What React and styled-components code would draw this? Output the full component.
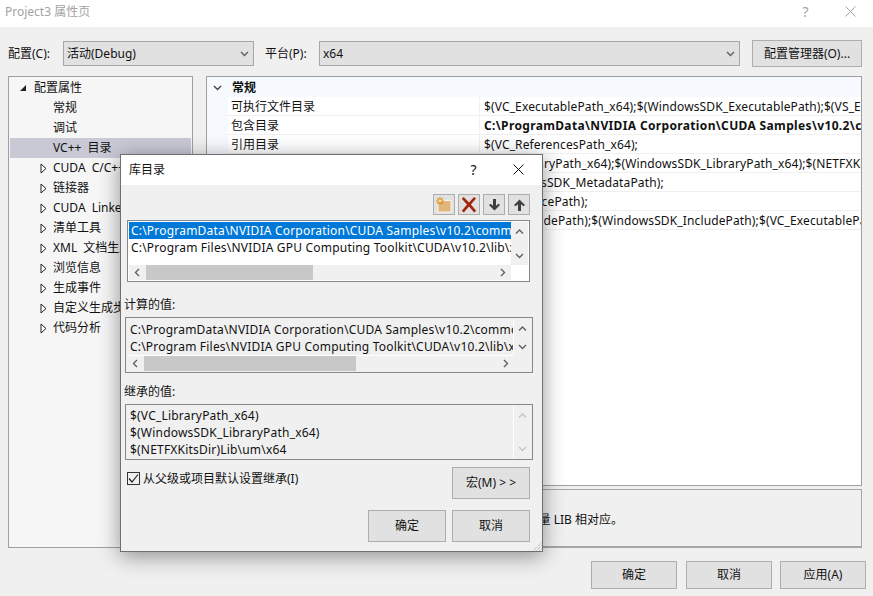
import React from 'react';
import styled, { createGlobalStyle } from 'styled-components';

const GlobalStyle = createGlobalStyle`
  html, body {
    margin: 0;
    padding: 0;
    background: #f0f0f0;
  }
  * {
    box-sizing: border-box;
  }
`;

const FONT = '"Noto Sans", "Noto Sans CJK SC", sans-serif';

const Page = styled.div`
  position: relative;
  width: 873px;
  height: 596px;
  overflow: hidden;
  background: #f0f0f0;
  color: #111;
  font: 12px/16px ${FONT};
`;

const TitleBar = styled.div`
  display: flex;
  align-items: center;
  height: ${p => p.$height}px;
  padding: 0 ${p => p.$right}px ${p => p.$bottom}px ${p => p.$left}px;
  background: #fff;
  color: ${p => (p.$inactive ? '#a3a3a3' : '#111')};
`;

const TitleText = styled.span`
  flex: 1;
`;

const TitleButton = styled.span`
  display: flex;
  justify-content: center;
  align-items: center;
  width: 45px;
  font-size: 14px;
`;

const Body = styled.div`
  display: flex;
  flex-direction: column;
  padding: 13px 11px 0 8px;
`;

const ConfigRow = styled.div`
  display: flex;
  align-items: center;
  height: 27px;
`;

const ConfigLabel = styled.label`
  flex: none;
  width: ${p => p.$width}px;
`;

const Select = styled.div`
  display: flex;
  justify-content: space-between;
  align-items: center;
  flex: ${p => (p.$grow ? 1 : 'none')};
  width: ${p => p.$width}px;
  height: 25px;
  margin-right: ${p => p.$gap}px;
  padding: 0 4px 0 3px;
  background: #e1e1e1;
  border: 1px solid #a6a6a6;
`;

const Button = styled.button`
  flex: none;
  width: ${p => p.$width}px;
  height: ${p => p.$height}px;
  margin-left: ${p => p.$pull || 0}px;
  padding: 0;
  background: #e1e1e1;
  border: 1px solid #adadad;
  color: #111;
  font: inherit;
`;

const Panels = styled.div`
  display: flex;
  gap: 13px;
  margin-top: 9px;
  height: 472px;
`;

const Tree = styled.div`
  flex: none;
  width: 185px;
  padding: 1px;
  background: #f6f6f6;
  border: 1px solid #9f9f9f;
`;

const TreeRow = styled.div`
  display: flex;
  align-items: center;
  height: 20px;
  padding-left: ${p => p.$left}px;
  background: ${p => (p.$selected ? '#c9c9d6' : 'transparent')};
  white-space: nowrap;
  word-spacing: 3px;
  overflow: hidden;
`;

const TreeArrow = styled.span`
  display: flex;
  flex: none;
  width: ${p => p.$width}px;
`;

const RightColumn = styled.div`
  flex: 1;
  display: flex;
  flex-direction: column;
  gap: 3px;
  min-width: 0;
`;

const PropertyGrid = styled.div`
  height: 410px;
  background: #fff;
  border: 1px solid #9f9f9f;
  overflow: hidden;
`;

const SectionRow = styled.div`
  display: flex;
  align-items: center;
  height: 20px;
  padding-top: 1px;
  background: #f6f9fe;
  font-weight: 700;
`;

const SectionToggle = styled.span`
  display: flex;
  justify-content: center;
  flex: none;
  width: 21px;
`;

const SectionName = styled.span`
  padding-left: 4px;
`;

const PropertyRow = styled.div`
  display: flex;
  height: 19px;
  padding-left: 21px;
  background: #f6f9fe;
  line-height: 19px;
  white-space: nowrap;
`;

const PropertyName = styled.div`
  flex: none;
  width: 252px;
  padding-left: 3px;
  background: #fff;
  border-right: 1px solid #f0f0f0;
  border-bottom: 1px solid #f0f0f0;
`;

const PropertyValue = styled.div`
  flex: 1;
  padding-left: 4px;
  overflow: hidden;
  background: #fff;
  border-bottom: 1px solid #f0f0f0;
  font-weight: ${p => (p.$bold ? 700 : 400)};
  letter-spacing: ${p => (p.$bold ? 0.35 : 0.13)}px;
`;

const Description = styled.div`
  flex: 1;
  display: flex;
  align-items: center;
  justify-content: flex-end;
  padding: 3px 238px 0 0;
  background: #f0f0f0;
  border: 1px solid #a6a6a6;
  border-bottom-width: 2px;
  white-space: nowrap;
`;

const Footer = styled.div`
  display: flex;
  justify-content: flex-end;
  gap: 9px;
  margin-top: 13px;
  padding-right: 7px;
`;

const Dialog = styled.div`
  position: absolute;
  left: 120px;
  top: 154px;
  width: 423px;
  height: 398px;
  background: #f0f0f0;
  border: 1px solid #6f6f6f;
  box-shadow: 0 4px 20px rgba(0, 0, 0, 0.42);
`;

const DialogBody = styled.div`
  display: flex;
  flex-direction: column;
  padding: 9px 9px 0 4px;
`;

const Toolbar = styled.div`
  display: flex;
  justify-content: flex-end;
  gap: 3px;
  margin-right: 3px;
`;

const ToolButton = styled.span`
  display: flex;
  justify-content: center;
  align-items: center;
  width: 22px;
  height: 21px;
  background: #e1e1e1;
  border: 1px solid #adadad;
`;

const ListBox = styled.div`
  display: grid;
  grid-template-columns: 1fr 17px;
  grid-template-rows: ${p => (p.$noHScroll ? '1fr' : '1fr 15px')};
  height: ${p => p.$height}px;
  margin: ${p => p.$margin};
  padding: 1px;
  background: ${p => (p.$editable ? '#fff' : '#f0f0f0')};
  border: 1px solid #828790;
`;

const ListRows = styled.div`
  padding: ${p => p.$top}px 0 0 ${p => (p.$editable ? 0 : 1)}px;
  min-width: 0;
  overflow: hidden;
  white-space: nowrap;
  border-right: ${p => (p.$editable ? 'none' : '1px solid #fff')};
  border-bottom: ${p => (p.$editable || p.$last ? 'none' : '1px solid #fff')};
`;

const ListRow = styled.div`
  height: 17px;
  padding-left: 2px;
  line-height: 17px;
  letter-spacing: 0.2px;
  overflow: hidden;
  background: ${p => (p.$selected ? '#0078d7' : 'transparent')};
  color: ${p => (p.$selected ? '#fff' : 'inherit')};
`;

const VScroll = styled.div`
  display: flex;
  flex-direction: column;
  justify-content: space-between;
  align-items: center;
  padding: 5px 0;
  background: #f0f0f0;
`;

const HScroll = styled.div`
  display: flex;
  align-items: stretch;
  background: #f0f0f0;
`;

const ScrollEnd = styled.span`
  display: flex;
  justify-content: center;
  align-items: center;
  flex: none;
  width: 17px;
`;

const ScrollThumb = styled.span`
  flex: none;
  width: ${p => p.$width}px;
  background: #c8c8c8;
`;

const ScrollSpacer = styled.span`
  flex: 1;
`;

const FieldLabel = styled.div`
  height: 16px;
  margin: ${p => p.$top}px 0 4px -1px;
`;

const MacroRow = styled.div`
  display: flex;
  justify-content: space-between;
  margin: 7px 3px 0 2px;
`;

const CheckLabel = styled.label`
  display: flex;
  gap: 3px;
  height: 16px;
  margin-top: 4px;
`;

const CheckBox = styled.span`
  display: flex;
  justify-content: center;
  align-items: center;
  width: 13px;
  height: 13px;
  margin-top: 1px;
  background: #f0f0f0;
  border: 1px solid #333;
`;

const DialogActions = styled.div`
  display: flex;
  justify-content: flex-end;
  gap: 6px;
  margin: 11px 3px 0 0;
`;

const ResizeGrip = styled.svg`
  position: absolute;
  right: 0;
  bottom: 0;
`;

const Chevron = ({ dir = 'down', color = '#606060', size = 9 }) => {
  const points = {
    down: '1,3 4.5,6.5 8,3',
    up: '1,6.5 4.5,3 8,6.5',
    left: '6,1 2.5,4.5 6,8',
    right: '3,1 6.5,4.5 3,8',
  }[dir];
  return (
    <svg width={size} height={size} viewBox="0 0 9 9">
      <polyline points={points} fill="none" stroke={color} strokeWidth="1.4" />
    </svg>
  );
};

const ExpandedArrow = () => (
  <svg width="8" height="8" viewBox="0 0 8 8">
    <polygon points="7,1 7,7 1,7" fill="#222" />
  </svg>
);

const CollapsedArrow = () => (
  <svg width="7" height="11" viewBox="0 0 7 11">
    <polygon points="1,1 6,5.5 1,10" fill="#fff" stroke="#222" />
  </svg>
);

const NewFolderIcon = () => (
  <svg width="20" height="19" viewBox="0 0 20 19">
    <path d="M4 7h3.5V5.5h9.5V17H4z" fill="#dfb77a" stroke="#fff" strokeWidth="0.8" />
    <path d="M6 2v8M2 6h8M3.2 3.2l5.6 5.6M8.8 3.2L3.2 8.8" stroke="#d98a10" strokeWidth="1.1" />
    <circle cx="6" cy="6" r="1.4" fill="#f7e3b0" />
  </svg>
);

const DeleteIcon = () => (
  <svg width="16" height="17" viewBox="0 0 16 17">
    <path d="M2.6 1l5.4 5.4L13 1l2 1.6L9.9 8.4l5.3 6.4-2.1 1.7L8 10.6 2.8 16.4.8 14.8 6 8.4 .8 2.8z" fill="#a1260d" />
  </svg>
);

const ArrowIcon = ({ up }) => (
  <svg width="13" height="14" viewBox="0 0 13 14">
    <path
      d={up ? 'M6.5 1.5L12 7l-1.5 1.2L8 6.2V13H5V6.2L2.5 8.2 1 7z' : 'M6.5 12.5L12 7l-1.5-1.2L8 7.8V1H5v6.8L2.5 5.8 1 7z'}
      fill="#3f3f3f"
    />
  </svg>
);

const CloseIcon = ({ color, size }) => (
  <svg width={size} height={size} viewBox="0 0 11 11">
    <path d="M0.5 0.5l10 10M10.5 0.5l-10 10" stroke={color} strokeWidth="1" fill="none" />
  </svg>
);

const treeItems = [
  { label: '常规' },
  { label: '调试' },
  { label: 'VC++ 目录', selected: true },
  { label: 'CUDA C/C++', arrow: true },
  { label: '链接器', arrow: true },
  { label: 'CUDA Linker', arrow: true },
  { label: '清单工具', arrow: true },
  { label: 'XML 文档生成器', arrow: true },
  { label: '浏览信息', arrow: true },
  { label: '生成事件', arrow: true },
  { label: '自定义生成步骤', arrow: true },
  { label: '代码分析', arrow: true },
];

const properties = [
  { name: '可执行文件目录', value: '$(VC_ExecutablePath_x64);$(WindowsSDK_ExecutablePath);$(VS_ExecutablePath);$(MSBuild_ExecutablePath)' },
  { name: '包含目录', value: 'C:\\ProgramData\\NVIDIA Corporation\\CUDA Samples\\v10.2\\common\\inc;$(IncludePath)', bold: true },
  { name: '引用目录', value: '$(VC_ReferencesPath_x64);' },
  { name: '库目录', value: '$(VC_LibraryPath_x64);$(WindowsSDK_LibraryPath_x64);$(NETFXKitsDir)Lib\\um\\x64' },
  { name: 'Windows 运行库目录', value: '$(WindowsSDK_MetadataPath);' },
  { name: '源目录', value: '$(VC_SourcePath);' },
  { name: '排除目录', value: '$(VC_IncludePath);$(WindowsSDK_IncludePath);$(VC_ExecutablePath_x64);' },
];

const PATH_DATA = 'C:\\ProgramData\\NVIDIA Corporation\\CUDA Samples\\v10.2\\common\\Lib\\x64';
const PATH_TOOLKIT = 'C:\\Program Files\\NVIDIA GPU Computing Toolkit\\CUDA\\v10.2\\lib\\x64';

const App = () => (
  <Page>
    <GlobalStyle />

    <TitleBar $height={27} $left={5} $right={0} $bottom={4} $inactive>
      <TitleText>Project3 属性页</TitleText>
      <TitleButton>?</TitleButton>
      <TitleButton><CloseIcon color="#a3a3a3" size={11} /></TitleButton>
    </TitleBar>

    <Body>
      <ConfigRow>
        <ConfigLabel $width={55}>配置(C):</ConfigLabel>
        <Select $width={191} $gap={11}>
          活动(Debug)
          <Chevron />
        </Select>
        <ConfigLabel $width={54}>平台(P):</ConfigLabel>
        <Select $grow $gap={12}>
          x64
          <Chevron />
        </Select>
        <Button $width={110} $height={27}>配置管理器(O)...</Button>
      </ConfigRow>

      <Panels>
        <Tree>
          <TreeRow $left={9}>
            <TreeArrow $width={15}><ExpandedArrow /></TreeArrow>
            配置属性
          </TreeRow>
          {treeItems.map(item => (
            <TreeRow key={item.label} $left={item.arrow ? 30 : 43} $selected={item.selected}>
              {item.arrow && <TreeArrow $width={13}><CollapsedArrow /></TreeArrow>}
              {item.label}
            </TreeRow>
          ))}
        </Tree>

        <RightColumn>
          <PropertyGrid>
            <SectionRow>
              <SectionToggle><Chevron color="#444" /></SectionToggle>
              <SectionName>常规</SectionName>
            </SectionRow>
            {properties.map(prop => (
              <PropertyRow key={prop.name}>
                <PropertyName>{prop.name}</PropertyName>
                <PropertyValue $bold={prop.bold}>{prop.value}</PropertyValue>
              </PropertyRow>
            ))}
          </PropertyGrid>
          <Description>指定生成 VC++ 项目期间使用的库文件路径，与环境变量 LIB 相对应。</Description>
        </RightColumn>
      </Panels>
    </Body>

    <Footer>
      <Button $width={86} $height={28}>确定</Button>
      <Button $width={86} $height={28}>取消</Button>
      <Button $width={86} $height={28} $pull={-1}>应用(A)</Button>
    </Footer>

    <Dialog>
      <TitleBar $height={30} $left={8} $right={1} $bottom={1}>
        <TitleText>库目录</TitleText>
        <TitleButton>?</TitleButton>
        <TitleButton><CloseIcon color="#111" size={11} /></TitleButton>
      </TitleBar>

      <DialogBody>
        <Toolbar>
          <ToolButton><NewFolderIcon /></ToolButton>
          <ToolButton><DeleteIcon /></ToolButton>
          <ToolButton><ArrowIcon /></ToolButton>
          <ToolButton><ArrowIcon up /></ToolButton>
        </Toolbar>

        <ListBox $height={62} $margin="5px 3px 0 2px" $editable>
          <ListRows $top={0} $editable>
            <ListRow $selected>{PATH_DATA}</ListRow>
            <ListRow>{PATH_TOOLKIT}</ListRow>
          </ListRows>
          <VScroll>
            <Chevron dir="up" />
            <Chevron />
          </VScroll>
          <HScroll>
            <ScrollEnd><Chevron dir="left" /></ScrollEnd>
            <ScrollThumb $width={167} />
            <ScrollSpacer />
            <ScrollEnd><Chevron dir="right" /></ScrollEnd>
          </HScroll>
        </ListBox>

        <FieldLabel $top={15}>计算的值:</FieldLabel>
        <ListBox $height={56} $margin="0">
          <ListRows $top={2}>
            <ListRow>{PATH_DATA}</ListRow>
            <ListRow>{PATH_TOOLKIT}</ListRow>
          </ListRows>
          <VScroll>
            <Chevron dir="up" />
            <Chevron />
          </VScroll>
          <HScroll>
            <ScrollEnd><Chevron dir="left" /></ScrollEnd>
            <ScrollThumb $width={212} />
            <ScrollSpacer />
            <ScrollEnd><Chevron dir="right" /></ScrollEnd>
          </HScroll>
        </ListBox>

        <FieldLabel $top={11}>继承的值:</FieldLabel>
        <ListBox $height={56} $margin="0" $noHScroll>
          <ListRows $top={1} $last>
            <ListRow>$(VC_LibraryPath_x64)</ListRow>
            <ListRow>$(WindowsSDK_LibraryPath_x64)</ListRow>
            <ListRow>$(NETFXKitsDir)Lib\um\x64</ListRow>
          </ListRows>
          <VScroll>
            <Chevron dir="up" color="#c4c4c4" />
            <Chevron color="#c4c4c4" />
          </VScroll>
        </ListBox>

        <MacroRow>
          <CheckLabel>
            <CheckBox>
              <svg width="11" height="11" viewBox="0 0 11 11">
                <polyline points="1,5.5 4,9 10,1.5" fill="none" stroke="#222" strokeWidth="1.2" />
              </svg>
            </CheckBox>
            从父级或项目默认设置继承(I)
          </CheckLabel>
          <Button $width={78} $height={32}>宏(M) &gt; &gt;</Button>
        </MacroRow>

        <DialogActions>
          <Button $width={78} $height={32}>确定</Button>
          <Button $width={78} $height={32}>取消</Button>
        </DialogActions>
      </DialogBody>

      <ResizeGrip width="10" height="10" viewBox="0 0 10 10">
        <path d="M9.5 1.5l-8 8M9.5 4.5l-5 5M9.5 7.5l-2 2" stroke="#9a9a9a" strokeWidth="1" strokeDasharray="1 1" />
      </ResizeGrip>
    </Dialog>
  </Page>
);

export default App;
